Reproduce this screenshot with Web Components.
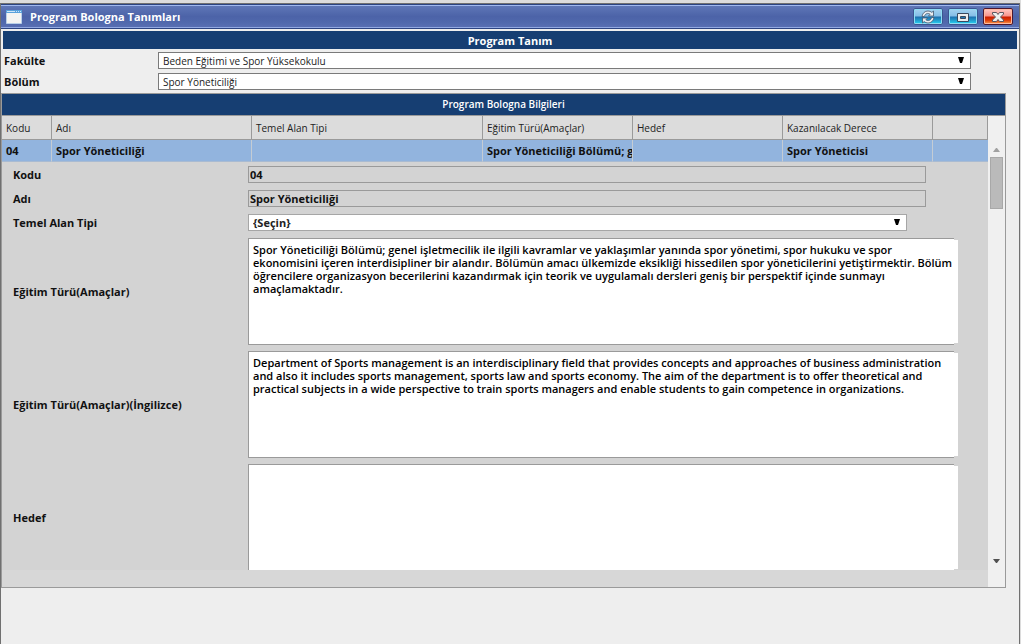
<!DOCTYPE html>
<html lang="tr">
<head>
<meta charset="utf-8">
<title>Program Bologna Tanımları</title>
<style>
html, body { margin: 0; }
body { background: #dcdcdc; font: 10px/14px "Open Sans", "Noto Sans", sans-serif; color: #222; }
</style>
</head>
<body>
<app-window heading="Program Bologna Tanımları">
  <section-band>Program Tanım</section-band>
  <filter-form></filter-form>
  <bologna-grid heading="Program Bologna Bilgileri"></bologna-grid>
</app-window>

<script>
class BaseElement extends HTMLElement {
  connectedCallback() {
    if (this.shadowRoot) return;
    this.attachShadow({ mode: 'open' }).innerHTML =
      `<style>*{box-sizing:border-box}${this.css()}</style>${this.html()}`;
  }
  css() { return ''; }
  html() { return '<slot></slot>'; }
}

/* Drop-down markup and styles shared by the filter form and the detail fields. */
const selectCss = `
  .select { flex: 1; position: relative; }
  select { display: block; width: 100%; height: 17px; margin: 0; padding: 1px 20px 0 4px; border: 1px solid var(--edge, #7a7a7a);
    border-radius: 0; background: #fff; color: #222; appearance: none; font: inherit; line-height: 14px; }
  .select svg { position: absolute; right: 7px; top: 4px; pointer-events: none; }`;
const selectHtml = (id, value) => `<div class="select"><select id="${id}"><option>${value}</option></select>
  <svg width="6" height="7" viewBox="0 0 6 7"><path d="M0 1h6L4 7H2z"/></svg></div>`;

class WindowButton extends BaseElement {
  css() { return `
    :host { display: block; }
    button { display: grid; place-items: center; width: 30px; height: 17px; padding: 0;
      border: 1px solid #8fd0ea; outline: 1px solid #3c5590; outline-offset: -1px; border-radius: 2px;
      box-shadow: inset 0 0 0 1px #8fdcf4;
      background: linear-gradient(#a5d3f0 0, #84bde6 48%, #1d6fae 52%, #2290c4 70%, #25d8f6 100%); }
    :host([kind=close]) button { outline-color: #4a1730; border-color: #ffb08a; box-shadow: inset 0 0 0 1px #ffb9a0;
      background: linear-gradient(#ffc9c4 0, #f8938a 48%, #cc1c00 52%, #dc3a08 75%, #ffa350 100%); }
    svg { display: block; }`; }
  html() {
    const kind = this.getAttribute('kind');
    const icons = {
      refresh: `<path fill="#eceef2" stroke="#44566b" stroke-width=".8" d="M1 6.500C1.500 3 4 1 7 1c1.500 0 2.800.500 3.800 1.400L12.500 1v5H7.500l1.600-1.700C7 2.500 4 3.600 3.400 6.500zM13 7.500c-.5 3.500-3 5.500-6 5.500-1.500 0-2.800-.5-3.800-1.400L1.500 13V8h5l-1.600 1.700c2.100 1.800 5.100.7 5.700-2.200z"/>`,
      restore: `<path fill="#eee" stroke="#3b4a5e" fill-rule="evenodd" d="M1.500 3.500h11v8h-11zM4.500 6.500v2h5v-2z"/>`,
      close: `<path fill="#eee" stroke="#5a5560" d="M1.500 2.500h4L7 4.500l1.500-2h4v1.500L9.500 7l3 3v1.500h-4L7 9.500l-1.500 2h-4V10l3-3-3-3z"/>`
    };
    return `<button type="button" aria-label="${this.getAttribute('label')}"><svg width="14" height="14" viewBox="0 0 14 14">${icons[kind]}</svg></button>`;
  }
}

class AppWindow extends BaseElement {
  css() { return `
    :host { display: flex; flex-direction: column; min-height: 100vh; padding-top: 3px; }
    .frame { flex: 1; border: solid #707070; border-width: 1px 1px 0; margin-right: 1px; background: #eee; }
    header { display: flex; align-items: center; height: 25px; padding: 0 5px; border: solid #2c4482; border-width: 1px 0;
      box-shadow: inset 0 1px #a0b8ee, inset 0 -1px #92a9e2;
      background: linear-gradient(#6078b8, #4c63a8 50%, #5068ac 75%, #5a70b4); }
    h1 { flex: 1; margin: 0 0 0 8px; font-size: 11px; line-height: 14px; font-weight: 700; color: #fff; }
    nav { display: flex; gap: 5px; padding-right: 1px; }
    main { padding: 2px 0 0; }
    svg { display: block; }`; }
  html() { return `<div class="frame">
    <header>
      <svg width="16" height="14" viewBox="0 0 16 14"><path fill="#f4f4f2" stroke="#b8cfe8" d="M.5.5h15v13H.5z"/><path fill="#5aa2dc" d="M0 0h16v3H0z"/><path fill="#cfe6f8" d="M1 1h8v1H1zM10 1h1v1h-1zM12 1h1v1h-1zM14 1h1v1h-1z"/></svg>
      <h1>${this.getAttribute('heading')}</h1>
      <nav>
        <window-button kind="refresh" label="Yenile"></window-button>
        <window-button kind="restore" label="Önceki boyut"></window-button>
        <window-button kind="close" label="Kapat"></window-button>
      </nav>
    </header>
    <main><slot></slot></main></div>`; }
}

class SectionBand extends BaseElement {
  css() { return `
    :host { display: block; box-sizing: border-box; margin: 0 2px; padding-top: 2px; background: #163e72; color: #fff; text-align: center;
      font-weight: 700; font-size: 11px; line-height: 16px; height: 18px; }`; }
}

class FilterForm extends BaseElement {
  css() { return `
    :host { display: grid; grid-template-columns: 154px 1fr; gap: 4px 0; padding: 3px 48px 3px 3px; }
    label { font-weight: 700; font-size: 11px; line-height: 17px; color: #111; }
    ${selectCss}`; }
  html() { return `
    <label for="faculty">Fakülte</label>${selectHtml('faculty', 'Beden Eğitimi ve Spor Yüksekokulu')}
    <label for="department">Bölüm</label>${selectHtml('department', 'Spor Yöneticiliği')}`; }
}

class TextField extends BaseElement {
  css() { return `
    :host { display: grid; grid-template-columns: 235px 1fr; align-items: center; padding-left: 11px; font-size: 11px; color: #111; font-weight: 700; }
    label { line-height: 17px; }
    input { height: 17px; width: 100%; margin: 0; padding: 0 1px; border: 1px solid #9a9a9a; background: transparent; color: inherit; font: inherit; }
    .box { display: flex; }
    :host([kind=text]) .box { margin-right: 62px; }
    :host([kind=select]) .box { margin-right: 81px; --edge: #a6a6a6; }
    :host([kind=area]) .box { margin-right: 30px; font-weight: 600; }
    textarea { flex: 1; min-width: 0; height: 107px; margin: 0; padding: 4px 0 4px 4px; border: 1px solid #9a9a9a; border-right: 0; border-radius: 0;
      background: #fff; color: #000; font: inherit; line-height: 13px; resize: none; overflow: hidden; }
    i { width: 4px; margin: 2px 0; background: #fff; }
    ${selectCss}`; }
  html() {
    const label = this.getAttribute('label'), value = this.getAttribute('value') || '';
    const control = {
      text: `<input id="f" readonly value="${value}">`,
      select: selectHtml('f', value),
      area: `<textarea id="f">${value}</textarea><i></i>`
    }[this.getAttribute('kind')];
    return `<label for="f">${label}</label><div class="box">${control}</div>`;
  }
}

class ScrollTrack extends BaseElement {
  css() { return `
    :host { display: flex; flex-direction: column; align-items: center; background: #f0f0f0; padding: 32px 0 24px; }
    .thumb { width: 13px; height: 52px; margin: 5px 0 auto; background: #bababa; border: 1px solid #a8a8a8; }
    svg { display: block; }`; }
  html() { return `<svg width="7" height="4" viewBox="0 0 7 4"><path fill="#a0a0a0" d="M0 4h7L4 0H3z"/></svg>
    <div class="thumb"></div>
    <svg width="7" height="4" viewBox="0 0 7 4"><path fill="#505050" d="M0 0h7L4 4H3z"/></svg>`; }
}

class BolognaGrid extends BaseElement {
  css() { return `
    :host { display: block; margin-right: 13px; border: 1px solid #9a9a9a; background: #d7d7d7; }
    h2 { margin: 0; background: #163e72; color: #fff; text-align: center; font-size: 10px; font-weight: 600;
      line-height: 21px; height: 22px; border-bottom: 1px solid #9a9a9a; }
    .body { display: grid; grid-template-columns: 1fr 17px; }
    table { width: 100%; table-layout: fixed; border-collapse: separate; border-spacing: 0; }
    th, td { padding: 0 0 0 4px; text-align: left; white-space: nowrap; overflow: hidden; border-right: 1px solid #9a9a9a; }
    th { height: 24px; font-weight: 400; background: #dcdcdc; border-bottom: 1px solid #9a9a9a; color: #222; }
    td { height: 22px; font-size: 11px; font-weight: 700; color: #111; background: #92b4de; border-color: #c4ccd4; border-bottom: 1px solid #a9bbd2; }
    td:last-child { border-right: 0; }
    .detail { height: 408px; overflow: hidden; background: #d3d3d3; }
    .fields { display: grid; gap: 6px 0; padding-top: 4px; }
    .short { display: grid; gap: 7px 0; padding-bottom: 1px; }
    footer { height: 17px; }`; }
  html() {
    const row = (kind, label, value = '') => `<text-field kind="${kind}" label="${label}" value="${value}"></text-field>`;
    return `<h2>${this.getAttribute('heading')}</h2>
    <div class="body"><div>
      <table>
        <colgroup><col style="width:50px"><col style="width:200px"><col><col style="width:150px"><col style="width:150px"><col style="width:150px"><col style="width:55px"></colgroup>
        <thead><tr><th>Kodu</th><th>Adı</th><th>Temel Alan Tipi</th><th>Eğitim Türü(Amaçlar)</th><th>Hedef</th><th>Kazanılacak Derece</th><th></th></tr></thead>
        <tbody><tr><td>04</td><td>Spor Yöneticiliği</td><td></td><td>Spor Yöneticiliği Bölümü; g</td><td></td><td>Spor Yöneticisi</td><td></td></tr></tbody>
      </table>
      <div class="detail"><div class="fields">
        <div class="short">
          ${row('text', 'Kodu', '04')}
          ${row('text', 'Adı', 'Spor Yöneticiliği')}
          ${row('select', 'Temel Alan Tipi', '{Seçin}')}
        </div>
        ${row('area', 'Eğitim Türü(Amaçlar)', 'Spor Yöneticiliği Bölümü; genel işletmecilik ile ilgili kavramlar ve yaklaşımlar yanında spor yönetimi, spor hukuku ve spor ekonomisini içeren interdisipliner bir alandır. Bölümün amacı ülkemizde eksikliği hissedilen spor yöneticilerini yetiştirmektir. Bölüm öğrencilere organizasyon becerilerini kazandırmak için teorik ve uygulamalı dersleri geniş bir perspektif içinde sunmayı amaçlamaktadır.')}
        ${row('area', 'Eğitim Türü(Amaçlar)(İngilizce)', 'Department of Sports management is an interdisciplinary field that provides concepts and approaches of business administration and also it includes sports management, sports law and sports economy. The aim of the department is to offer theoretical and practical subjects in a wide perspective to train sports managers and enable students to gain competence in organizations.')}
        ${row('area', 'Hedef')}
      </div></div>
      <footer></footer>
    </div><scroll-track></scroll-track></div>`;
  }
}

customElements.define('window-button', WindowButton);
customElements.define('text-field', TextField);
customElements.define('scroll-track', ScrollTrack);
customElements.define('section-band', SectionBand);
customElements.define('filter-form', FilterForm);
customElements.define('bologna-grid', BolognaGrid);
customElements.define('app-window', AppWindow);
</script>
</body>
</html>
